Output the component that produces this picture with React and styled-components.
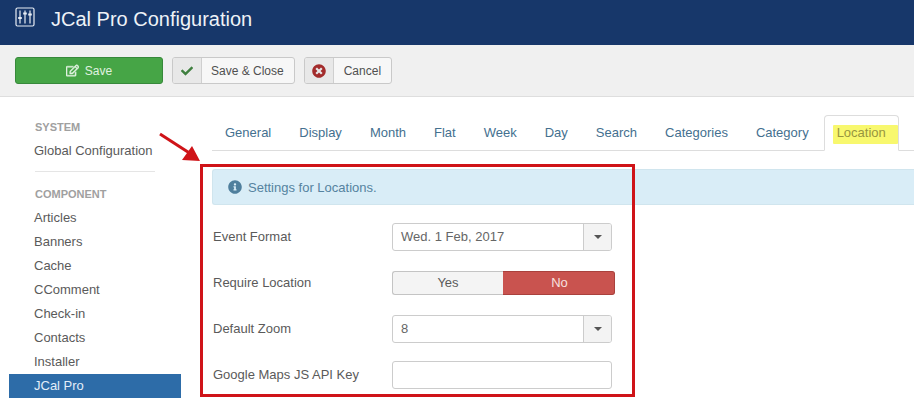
import React from "react";
import styled, { createGlobalStyle } from "styled-components";
import { FaCheck, FaInfoCircle, FaRegEdit, FaTimesCircle } from "react-icons/fa";

const Global = createGlobalStyle`
  html, body { margin: 0; padding: 0; background: #fff; height: 404px; overflow: hidden; }
  body { font-family: "Liberation Sans", Arial, sans-serif; font-size: 13px; color: #5a5a5a; }
  * { box-sizing: border-box; }
`;
const Page = styled.div`position: relative; width: 914px; height: 404px; overflow: hidden;`;
const Header = styled.header`
  height: 45px; background: #17376a; color: #eef2f7; display: flex; align-items: center;
  padding: 0 0 8px 15px; gap: 16px;
`;
const Title = styled.h1`margin: 0; font-size: 20px; font-weight: 400; line-height: 28px;`;
const HeaderIcon = styled.svg`flex: none; margin-bottom: 3px;`;
const Toolbar = styled.div`
  height: 52px; background: #f0f0f0; border-bottom: 1px solid #dedede;
  display: flex; align-items: flex-start; padding: 12px 0 0 15px; gap: 9px;
`;
const SaveButton = styled.button`
  width: 148px; height: 27px; border: 1px solid #37893b; border-radius: 3px; background: #46a546; color: #e0f2e0;
  font: 12px "Liberation Sans", Arial, sans-serif; display: flex; align-items: center; justify-content: center; gap: 6px; padding: 0;
`;
const Button = styled.button`
  height: 27px; border: 1px solid #c9c9c9; border-radius: 3px; background: #f7f7f7; color: #505050;
  font: 12px "Liberation Sans", Arial, sans-serif; display: flex; align-items: stretch; padding: 0; overflow: hidden;
`;
const ButtonIcon = styled.span`
  width: 29px; background: #e8e8e8; border-right: 1px solid #cfcfcf; display: flex; align-items: center; justify-content: center;
  color: ${p => p.$color};
`;
const ButtonLabel = styled.span`display: flex; align-items: center; padding: 0 10px 0 ${p => p.$left}px;`;
const Body = styled.div`display: flex; align-items: flex-start; padding-left: 9px;`;
const Sidebar = styled.nav`width: 172px; flex: none; padding-top: 23px; margin-right: 31px;`;
const SectionTitle = styled.div`
  font-size: 11px; font-weight: 700; color: #a0a0a0; line-height: 14px; padding-left: 26px; margin-bottom: 5px;
`;
const NavItem = styled.div`
  height: 24px; line-height: 24px; padding-left: 25px; color: ${p => p.$active ? "#e3eef9" : "#5a5a5a"};
  background: ${p => p.$active ? "#2d6ca8" : "transparent"};
`;
const Divider = styled.div`height: 1px; background: #e5e5e5; margin: 8px 26px 15px 26px; width: 120px;`;
const Main = styled.main`flex: 1; min-width: 0; padding-top: 18px;`;
const Tabs = styled.div`display: flex; height: 36px; border-bottom: 1px solid #ddd; margin-bottom: 18px; align-items: stretch;`;
const Tab = styled.div`
  padding: 0 12px; margin-right: 2px; border: 1px solid ${p => p.$active ? "#ddd" : "transparent"};
  border-bottom: ${p => p.$active ? "1px solid #fff" : "0"}; height: ${p => p.$active ? "36px" : "35px"};
  border-radius: 4px 4px 0 0; color: ${p => p.$active ? "#97953f" : "#44708f"};
  background: ${p => p.$active ? "#fff" : "transparent"}; line-height: 33px; position: relative;
`;
const Highlight = styled.span`
  position: absolute; left: 8px; top: 9px; width: 65px; height: 19px; background: #f8f86e; border-radius: 1px;
`;
const TabText = styled.span`position: relative;`;
const Form = styled.div`display: flex; flex-direction: column; gap: 18px;`;
const Alert = styled.div`
  height: 36px; background: #d9edf7; border: 1px solid #d0e5ee; border-right: 0; border-radius: 3px 0 0 3px;
  color: #5583a0; display: flex; align-items: center; padding-left: 15px; gap: 6px;
`;
const Row = styled.div`display: flex; align-items: center; height: 28px; padding-left: 1px;`;
const Label = styled.label`width: 179px; flex: none; color: #5a5a5a; padding-bottom: 2px;`;
const Select = styled.div`
  width: 220px; height: 28px; border: 1px solid #ccc; border-radius: 3px; display: flex; overflow: hidden; background: #fff;
`;
const SelectValue = styled.div`flex: 1; padding-left: 8px; line-height: 26px; color: #666;`;
const SelectArrow = styled.div`
  width: 28px; border-left: 1px solid #ccc; background: #f3f3f3; display: flex; align-items: center; justify-content: center;
  &::after { content: ""; border: 4px solid transparent; border-top: 4px solid #555; border-bottom: 0; }
`;
const Toggle = styled.div`display: flex; width: 223px; height: 24px;`;
const ToggleOption = styled.div`
  width: ${p => p.$on ? 112 : 111}px; text-align: center; line-height: 22px;
  padding-left: ${p => p.$on ? 2 : 0}px;
  border: 1px solid ${p => p.$on ? "#a9413d" : "#c4c4c4"}; ${p => p.$on ? "border-left: 0;" : "border-right: 0;"}
  background: ${p => p.$on ? "#c9534f" : "#f4f4f4"}; color: ${p => p.$on ? "#f8e0df" : "#5a5a5a"};
  border-radius: ${p => p.$on ? "0 3px 3px 0" : "3px 0 0 3px"};
`;
const Input = styled.div`width: 220px; height: 28px; border: 1px solid #ccc; border-radius: 3px; background: #fff;`;
const RedBox = styled.div`
  position: absolute; left: 200px; top: 164px; width: 435px; height: 233px; border: 3px solid #cf1318; pointer-events: none;
`;
const Arrow = styled.svg`position: absolute; left: 155px; top: 128px;`;

const items = ["Articles", "Banners", "Cache", "CComment", "Check-in", "Contacts", "Installer"];
const tabs = ["General", "Display", "Month", "Flat", "Week", "Day", "Search", "Categories", "Category"];

const SlidersIcon = () => (
  <HeaderIcon width="20" height="20" viewBox="0 0 20 20" fill="none" stroke="#e8edf4" strokeWidth="1.2">
    <rect x="1" y="1" width="18" height="18" rx="1.5" />
    <path d="M5 3.5v13M10 3.5v13M15 3.5v13" />
    <path d="M3.2 11h3.6M8.2 6.5h3.6M13.2 7.5h3.6" strokeWidth="2" />
  </HeaderIcon>
);

export default function App() {
  return (
    <Page>
      <Global />
      <Header>
        <SlidersIcon />
        <Title>JCal Pro Configuration</Title>
      </Header>
      <Toolbar>
        <SaveButton><FaRegEdit size={13} color="#e0f2e0" stroke="#e0f2e0" strokeWidth={20} /> Save</SaveButton>
        <Button>
          <ButtonIcon $color="#3f7f3f"><FaCheck size={12} /></ButtonIcon>
          <ButtonLabel $left={9}>Save &amp; Close</ButtonLabel>
        </Button>
        <Button>
          <ButtonIcon $color="#a32c2c"><FaTimesCircle size={14} /></ButtonIcon>
          <ButtonLabel $left={10}>Cancel</ButtonLabel>
        </Button>
      </Toolbar>
      <Body>
        <Sidebar>
          <SectionTitle>SYSTEM</SectionTitle>
          <NavItem>Global Configuration</NavItem>
          <Divider />
          <SectionTitle>COMPONENT</SectionTitle>
          {items.map(i => <NavItem key={i}>{i}</NavItem>)}
          <NavItem $active>JCal Pro</NavItem>
        </Sidebar>
        <Main>
          <Tabs>
            {tabs.map(t => <Tab key={t}>{t}</Tab>)}
            <Tab $active><Highlight /><TabText>Location</TabText></Tab>
          </Tabs>
          <Form>
            <Alert><FaInfoCircle size={14} color="#4f7f9d" /> Settings for Locations.</Alert>
            <Row>
              <Label>Event Format</Label>
              <Select><SelectValue>Wed. 1 Feb, 2017</SelectValue><SelectArrow /></Select>
            </Row>
            <Row>
              <Label>Require Location</Label>
              <Toggle><ToggleOption>Yes</ToggleOption><ToggleOption $on>No</ToggleOption></Toggle>
            </Row>
            <Row>
              <Label>Default Zoom</Label>
              <Select><SelectValue>8</SelectValue><SelectArrow /></Select>
            </Row>
            <Row>
              <Label>Google Maps JS API Key</Label>
              <Input />
            </Row>
          </Form>
        </Main>
      </Body>
      <RedBox />
      <Arrow width="50" height="36" viewBox="0 0 50 36">
        <path d="M5 6L36 26" stroke="#cf1318" strokeWidth="3" />
        <path d="M45 33L27 32L37 18Z" fill="#cf1318" />
      </Arrow>
    </Page>
  );
}
